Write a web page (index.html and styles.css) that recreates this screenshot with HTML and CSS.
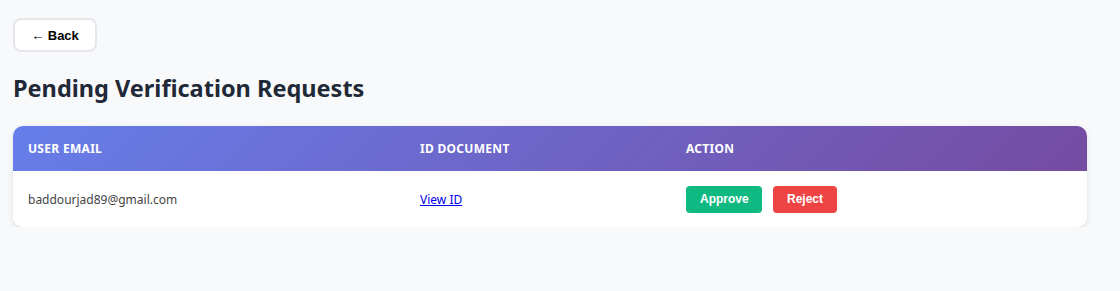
FILE: index.html
```html
<!DOCTYPE html>
<html>
<head>
<meta charset="utf-8">
<link rel="stylesheet" href="styles.css">
</head>
<body>
<div class="page">
  <button class="back-btn">← Back</button>
  <h1 class="title">Pending Verification Requests</h1>
  <div class="card">
    <table class="requests">
      <thead>
        <tr>
          <th class="col-email">User Email</th>
          <th class="col-doc">ID Document</th>
          <th class="col-action">Action</th>
        </tr>
      </thead>
      <tbody>
        <tr>
          <td class="email">baddourjad89@gmail.com</td>
          <td><a href="#" class="view-link">View ID</a></td>
          <td>
            <div class="actions">
              <button class="btn approve">Approve</button>
              <button class="btn reject">Reject</button>
            </div>
          </td>
        </tr>
      </tbody>
    </table>
  </div>
</div>
</body>
</html>
```
FILE: styles.css
```css
* { box-sizing: border-box; }
html, body { margin: 0; padding: 0; }
body {
  background: #f8f9fb;
  font-family: "Noto Sans", "Open Sans", sans-serif;
}
.page {
  padding: 18px 33px 0 13px;
}
.back-btn {
  display: block;
  width: 84px;
  height: 34px;
  background: #fff;
  border: 2px solid #e5e7eb;
  border-radius: 8px;
  font-family: "Liberation Sans", Arial, sans-serif;
  font-weight: bold;
  font-size: 13px;
  color: #000;
  padding: 0;
}
.title {
  margin: 20px 0 22px;
  font-size: 23.5px;
  line-height: 32px;
  font-weight: 700;
  color: #1f2937;
}
.card {
  background: #fff;
  border-radius: 10px;
  overflow: hidden;
  box-shadow: 0 2px 6px rgba(0,0,0,0.10);
}
.requests {
  width: 100%;
  border-collapse: collapse;
  table-layout: fixed;
}
.requests thead tr {
  background: linear-gradient(135deg, #667eea 0%, #764ba2 100%);
}
.requests th {
  text-align: left;
  color: #fff;
  text-transform: uppercase;
  font-size: 12px;
  font-weight: 700;
  letter-spacing: 0.3px;
  height: 45px;
  padding: 0 15px;
}
.col-email { width: 392px; }
.col-doc { width: 266px; }
.requests td {
  height: 56px;
  padding: 0 15px;
  font-size: 12px;
  color: #444;
  vertical-align: middle;
}
.view-link {
  color: #0000ee;
  text-decoration: underline;
}
.actions {
  display: flex;
  gap: 11px;
}
.btn {
  height: 27px;
  border: none;
  border-radius: 4px;
  color: #fff;
  font-family: "Liberation Sans", Arial, sans-serif;
  font-weight: bold;
  font-size: 12px;
  padding: 0 14px;
}
.approve { background: #10b981; width: 76px; }
.reject { background: #ef4444; width: 64px; }
```
